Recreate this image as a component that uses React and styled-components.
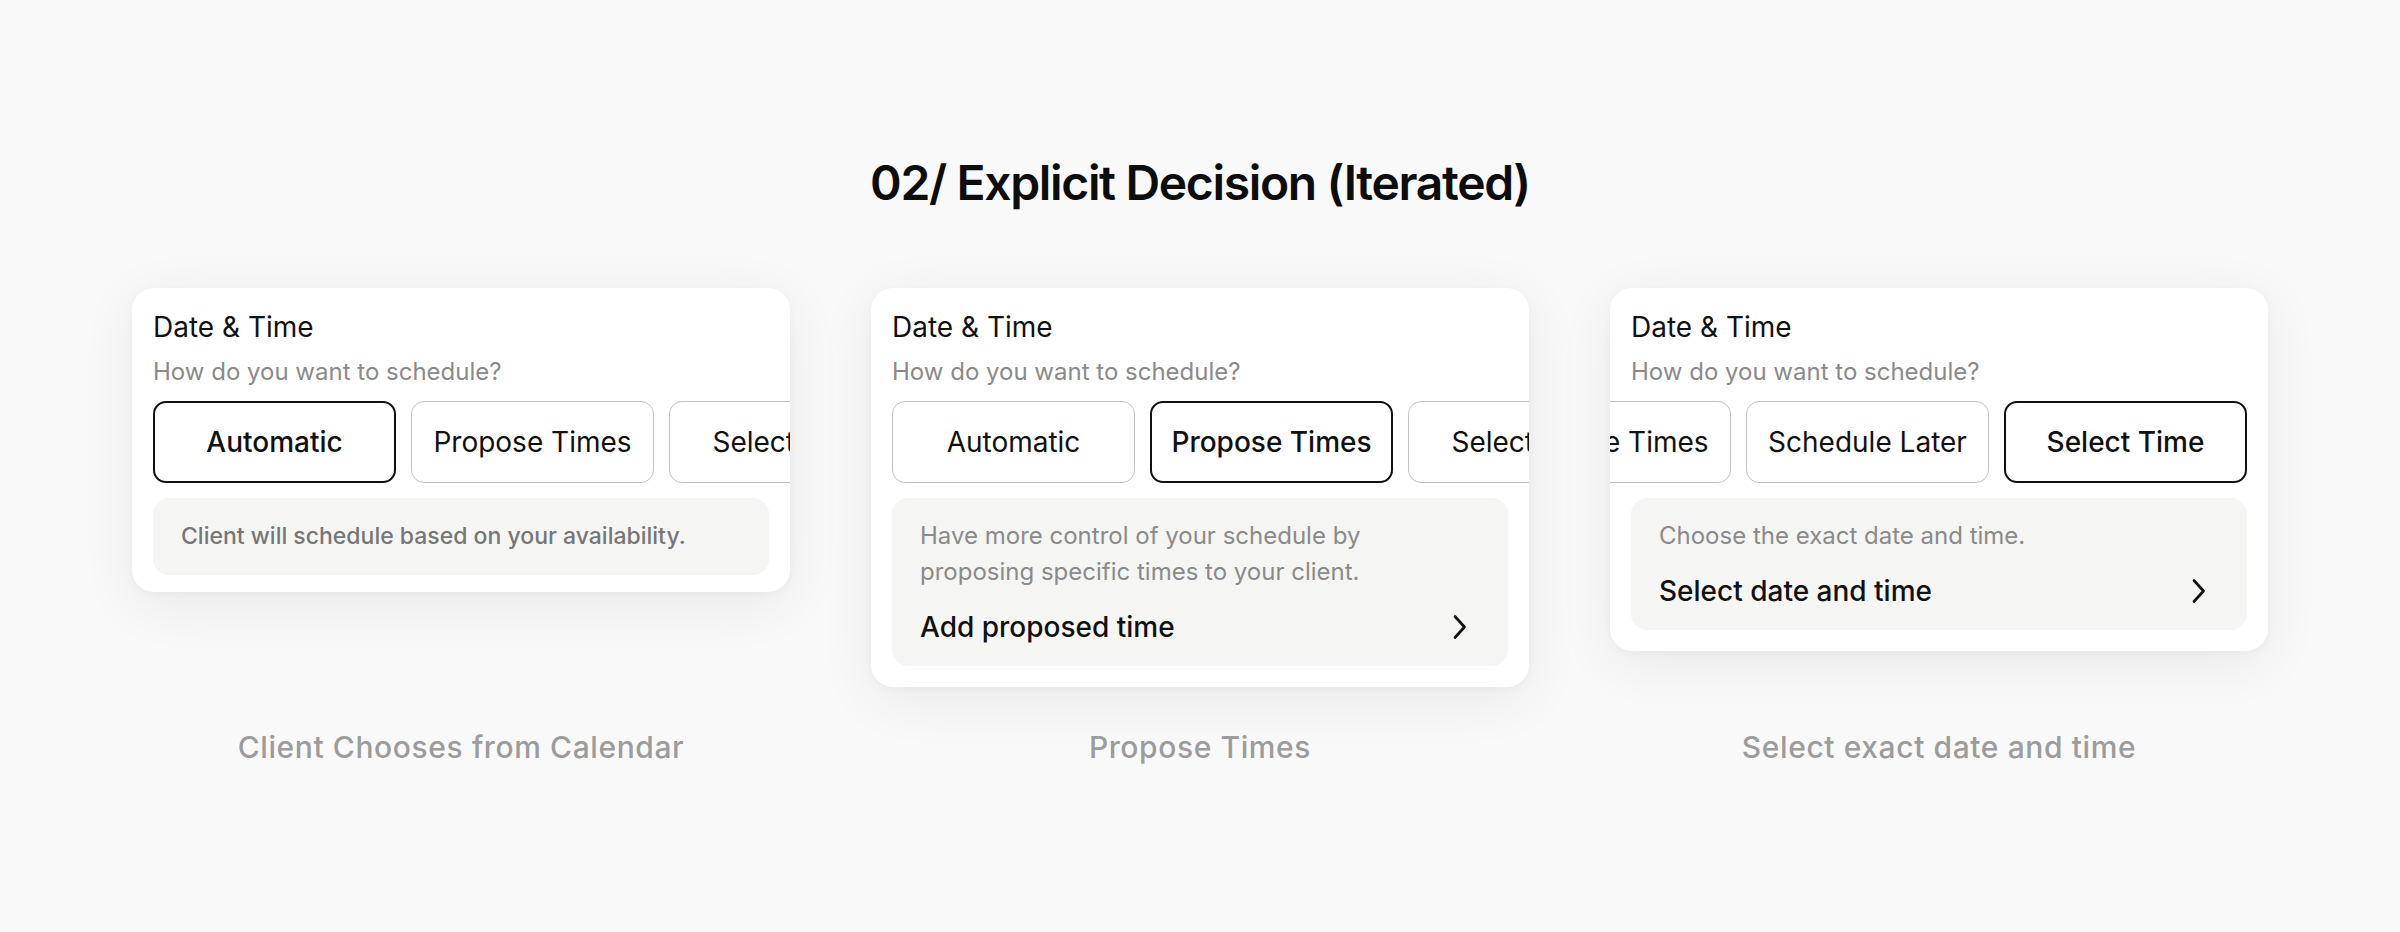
import React from "react";
import styled, { createGlobalStyle } from "styled-components";

const Global = createGlobalStyle`
  html, body { margin: 0; padding: 0; background: #f9f9f9; }
  body { font-family: Inter, "Liberation Sans", sans-serif; color: #111; -webkit-font-smoothing: antialiased; }
  * { box-sizing: border-box; }
`;

const Page = styled.main`
  min-height: 932px;
  display: flex;
  flex-direction: column;
  align-items: center;
  padding-top: 154px;
`;

const Heading = styled.h1`
  margin: 0;
  font-family: Inter, "Liberation Sans", sans-serif;
  font-weight: 600;
  font-size: 48px;
  line-height: 58px;
  letter-spacing: -0.028em;
  color: #0d0d0d;
`;

const Board = styled.section`
  margin-top: 76px;
  display: grid;
  grid-template-columns: repeat(3, 658px);
  column-gap: 81px;
  row-gap: 42px;
  align-items: start;
`;

const Card = styled.div`
  background: #fff;
  border-radius: 22px;
  padding: ${(p) => (p.$compact ? "22px 21px 17px" : "22px 21px 21px")};
  box-shadow: 0 12px 56px rgba(0, 0, 0, 0.07), 0 2px 10px rgba(0, 0, 0, 0.03);
  overflow: hidden;
`;

const CardTitle = styled.div`
  font-size: 28px;
  line-height: 34px;
  font-weight: 400;
  color: #111;
`;

const Prompt = styled.div`
  margin-top: 13px;
  font-size: 24px;
  line-height: 30px;
  color: #8a8a8a;
`;

const Options = styled.div`
  margin: 14px -21px 0;
  padding: 0 21px;
  display: flex;
  gap: 15px;
  overflow: hidden;
  justify-content: ${(p) => (p.$end ? "flex-end" : "flex-start")};
`;

const Option = styled.div`
  flex: 0 0 243px;
  height: 82px;
  border-radius: 13px;
  border: ${(p) => (p.$active ? "2.5px solid #111" : "1.5px solid #c2c2c2")};
  display: flex;
  align-items: center;
  justify-content: center;
  font-size: 28px;
  font-weight: ${(p) => (p.$active ? 500 : 400)};
  color: #111;
  white-space: nowrap;
`;

const Info = styled.div`
  margin-top: 15px;
  background: #f5f5f4;
  border-radius: 16px;
  padding: 20px 28px 21px;
`;

const Description = styled.div`
  max-width: ${(p) => (p.$strong ? "none" : "480px")};
  font-size: ${(p) => (p.$strong ? "23px" : "24px")};
  line-height: 36px;
  font-weight: ${(p) => (p.$strong ? 500 : 400)};
  color: ${(p) => (p.$strong ? "#767676" : "#8a8a8a")};
  white-space: ${(p) => (p.$strong ? "nowrap" : "normal")};
`;

const Action = styled.div`
  margin-top: 19px;
  height: 36px;
  display: flex;
  align-items: center;
  justify-content: space-between;
  font-size: 28px;
  font-weight: 500;
  color: #111;
`;

const Chevron = styled.svg`
  width: 16px;
  height: 26px;
  margin-right: 12px;
  flex-shrink: 0;
`;

const Caption = styled.div`
  text-align: center;
  font-family: Inter, "Liberation Sans", sans-serif;
  font-size: 30px;
  line-height: 36px;
  font-weight: 500;
  letter-spacing: 0.02em;
  color: #9c9c9c;
`;

const ChevronIcon = () => (
  <Chevron viewBox="0 0 16 26" fill="none">
    <path d="M3 2.5 L12.5 13 L3 23.5" stroke="#111" strokeWidth="2.7" strokeLinecap="round" strokeLinejoin="round" />
  </Chevron>
);

const cards = [
  {
    options: ["Automatic", "Propose Times", "Select Time"],
    active: "Automatic",
    description: "Client will schedule based on your availability.",
    strong: true,
    compact: true,
    caption: "Client Chooses from Calendar",
  },
  {
    options: ["Automatic", "Propose Times", "Select Time"],
    active: "Propose Times",
    description: "Have more control of your schedule by proposing specific times to your client.",
    action: "Add proposed time",
    caption: "Propose Times",
  },
  {
    options: ["Automatic", "Propose Times", "Schedule Later", "Select Time"],
    active: "Select Time",
    end: true,
    description: "Choose the exact date and time.",
    action: "Select date and time",
    caption: "Select exact date and time",
  },
];

export default function App() {
  return (
    <>
      <Global />
      <Page>
        <Heading>02/ Explicit Decision (Iterated)</Heading>
        <Board>
          {cards.map((c) => (
            <Card key={c.caption} $compact={c.compact}>
              <CardTitle>Date &amp; Time</CardTitle>
              <Prompt>How do you want to schedule?</Prompt>
              <Options $end={c.end}>
                {c.options.map((o) => (
                  <Option key={o} $active={o === c.active}>
                    {o}
                  </Option>
                ))}
              </Options>
              <Info>
                <Description $strong={c.strong}>{c.description}</Description>
                {c.action && (
                  <Action>
                    <span>{c.action}</span>
                    <ChevronIcon />
                  </Action>
                )}
              </Info>
            </Card>
          ))}
          {cards.map((c) => (
            <Caption key={c.caption + "-cap"}>{c.caption}</Caption>
          ))}
        </Board>
      </Page>
    </>
  );
}
